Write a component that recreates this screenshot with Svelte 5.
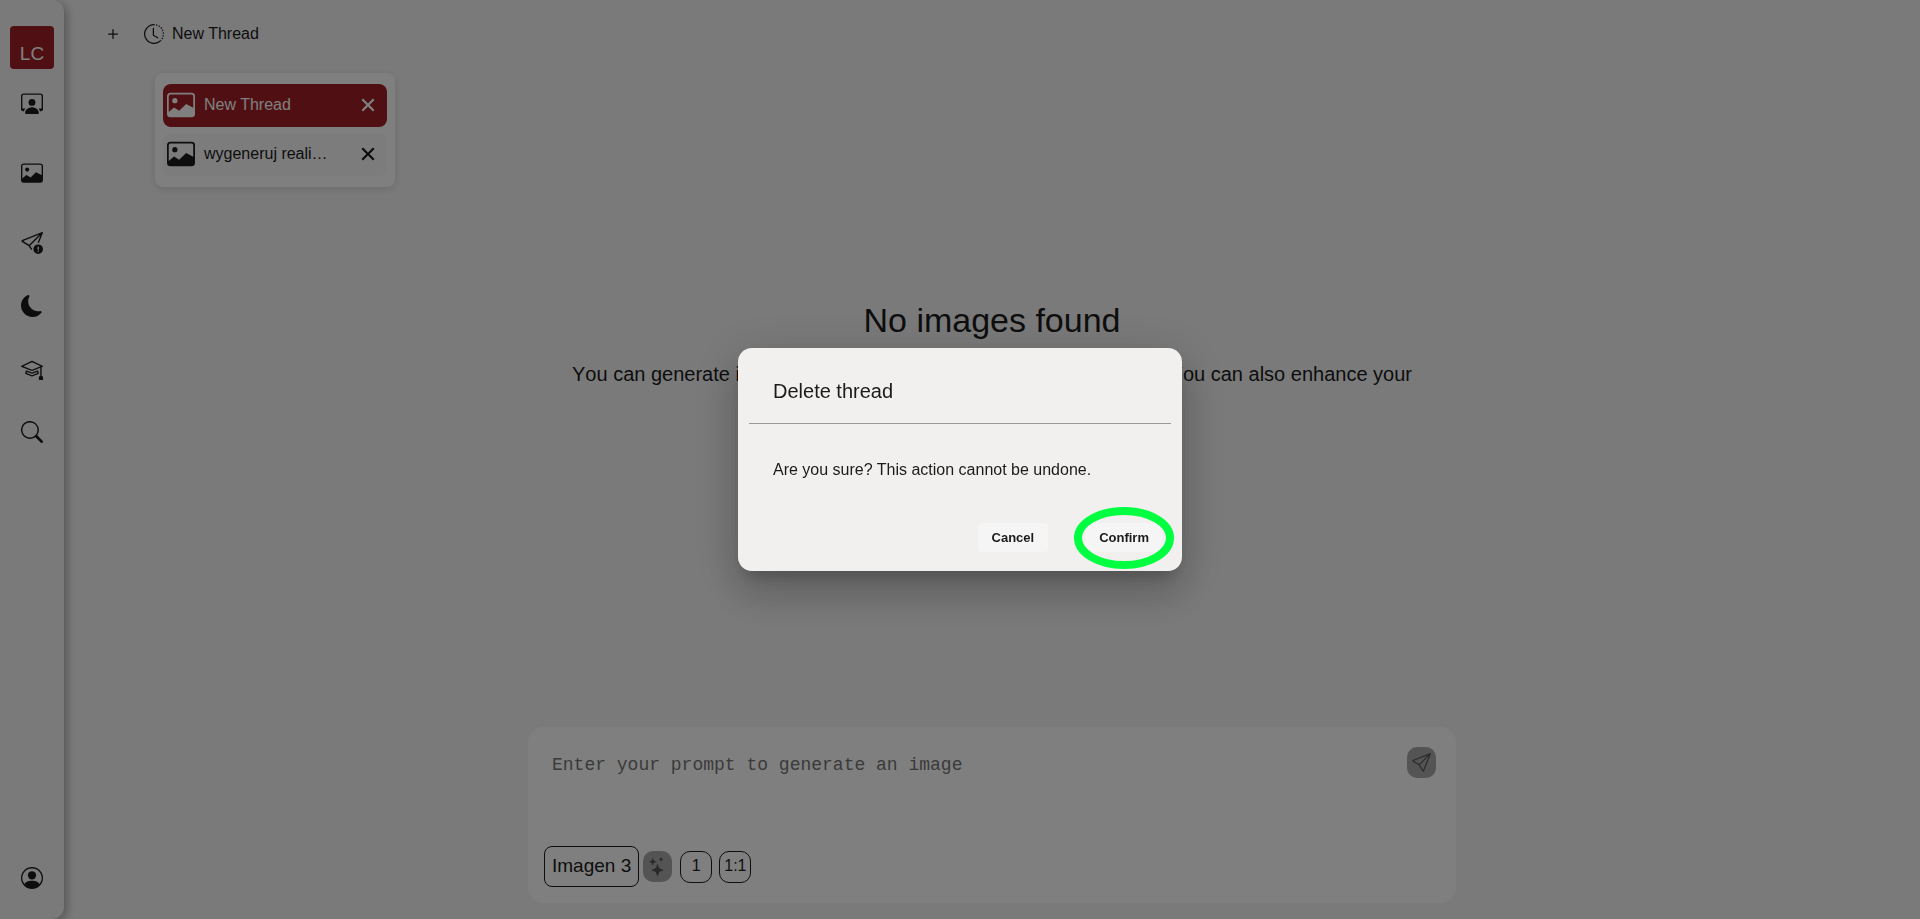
<script>
  const icons = {
    workspace: [
      'M4 16s-1 0-1-1 1-4 5-4 5 3 5 4-1 1-1 1zm4-5.95a2.5 2.5 0 1 0 0-5 2.5 2.5 0 0 0 0 5',
      'M2 1a2 2 0 0 0-2 2v9.5A1.5 1.5 0 0 0 1.5 14h.653a5.4 5.4 0 0 1 1.066-2H1V3a1 1 0 0 1 1-1h12a1 1 0 0 1 1 1v9h-2.219c.554.654.89 1.373 1.066 2h.653a1.5 1.5 0 0 0 1.5-1.5V3a2 2 0 0 0-2-2z'
    ],
    image: [
      'M6.002 5.5a1.5 1.5 0 1 1-3 0 1.5 1.5 0 0 1 3 0',
      'M2.002 1a2 2 0 0 0-2 2v10a2 2 0 0 0 2 2h12a2 2 0 0 0 2-2V3a2 2 0 0 0-2-2zm12 1a1 1 0 0 1 1 1v6.5l-3.777-1.947a.5.5 0 0 0-.577.093l-3.71 3.71-2.66-1.772a.5.5 0 0 0-.63.062L1.002 12V3a1 1 0 0 1 1-1z'
    ],
    report: [
      'M15.964.686a.5.5 0 0 0-.65-.65L.767 5.855a.75.75 0 0 0-.124 1.329l4.995 3.178 1.531 2.406a.5.5 0 0 0 .844-.536L6.637 10.07l7.494-7.494-1.895 4.738a.5.5 0 1 0 .928.372zm-2.54 1.183L5.93 9.363 1.591 6.602z',
      'M12.5 16a3.5 3.5 0 1 0 0-7 3.5 3.5 0 0 0 0 7m.5-5v1.5a.5.5 0 0 1-1 0V11a.5.5 0 0 1 1 0m0 3a.5.5 0 1 1-1 0 .5.5 0 0 1 1 0'
    ],
    moon: [
      'M6 .278a.77.77 0 0 1 .08.858 7.2 7.2 0 0 0-.878 3.46c0 4.021 3.278 7.277 7.318 7.277q.792-.001 1.533-.16a.79.79 0 0 1 .81.316.73.73 0 0 1-.031.893A8.35 8.35 0 0 1 8.344 16C3.734 16 0 12.286 0 7.71 0 4.266 2.114 1.312 5.124.06A.75.75 0 0 1 6 .278'
    ],
    mortarboard: [
      'M8.211 2.047a.5.5 0 0 0-.422 0l-7.5 3.5a.5.5 0 0 0 .025.917l7.5 3a.5.5 0 0 0 .372 0L14 7.14V13a1 1 0 0 0-1 1v2h3v-2a1 1 0 0 0-1-1V6.739l.686-.275a.5.5 0 0 0 .025-.917zM8 8.46 1.758 5.965 8 3.052l6.242 2.913z',
      'M4.176 9.032a.5.5 0 0 0-.656.327l-.5 1.7a.5.5 0 0 0 .294.605l4.5 1.8a.5.5 0 0 0 .372 0l4.5-1.8a.5.5 0 0 0 .294-.605l-.5-1.7a.5.5 0 0 0-.656-.327L8 10.466zm-.068 1.873.22-.748 3.496 1.311a.5.5 0 0 0 .352 0l3.496-1.311.22.748L8 12.46z'
    ],
    search: [
      'M11.742 10.344a6.5 6.5 0 1 0-1.397 1.398h-.001q.044.06.098.115l3.85 3.85a1 1 0 0 0 1.415-1.414l-3.85-3.85a1 1 0 0 0-.115-.1zM12 6.5a5.5 5.5 0 1 1-11 0 5.5 5.5 0 0 1 11 0'
    ],
    person: [
      'M11 6a3 3 0 1 1-6 0 3 3 0 0 1 6 0',
      'M0 8a8 8 0 1 1 16 0A8 8 0 0 1 0 8m8-7a7 7 0 0 0-5.468 11.37C3.242 11.226 4.805 10 8 10s4.757 1.225 5.468 2.37A7 7 0 0 0 8 1'
    ],
    history: [
      'M8.515 1.019A7 7 0 0 0 8 1V0a8 8 0 0 1 .589.022zm2.004.45a7 7 0 0 0-.985-.299l.219-.976q.576.129 1.126.342zm1.37.71a7 7 0 0 0-.439-.27l.493-.87a8 8 0 0 1 .979.654l-.615.789a7 7 0 0 0-.418-.302zm1.834 1.79a7 7 0 0 0-.653-.796l.724-.69q.406.429.747.91zm.744 1.352a7 7 0 0 0-.214-.468l.893-.45a8 8 0 0 1 .45 1.088l-.95.313a7 7 0 0 0-.179-.483m.53 2.507a7 7 0 0 0-.1-1.025l.985-.17q.1.58.116 1.17zm-.131 1.538q.05-.254.081-.51l.993.123a8 8 0 0 1-.23 1.155l-.964-.267q.069-.247.12-.501m-.952 2.379q.276-.436.486-.908l.914.405q-.24.54-.555 1.038zm-.964 1.205q.183-.183.35-.378l.758.653a8 8 0 0 1-.401.432z',
      'M8 1a7 7 0 1 0 4.95 11.95l.707.707A8.001 8.001 0 1 1 8 0z',
      'M7.5 3a.5.5 0 0 1 .5.5v5.21l3.248 1.856a.5.5 0 0 1-.496.868l-3.5-2A.5.5 0 0 1 7 9V3.5a.5.5 0 0 1 .5-.5'
    ],
    close: [
      'M2.2 3.6 3.6 2.2 8 6.6l4.4-4.4 1.4 1.4L9.4 8l4.4 4.4-1.4 1.4L8 9.4l-4.4 4.4-1.4-1.4L6.6 8z'
    ],
    plus: [
      'M8 4a.5.5 0 0 1 .5.5v3h3a.5.5 0 0 1 0 1h-3v3a.5.5 0 0 1-1 0v-3h-3a.5.5 0 0 1 0-1h3v-3A.5.5 0 0 1 8 4'
    ],
    send: [
      'M15.854.146a.5.5 0 0 1 .11.54l-5.819 14.547a.75.75 0 0 1-1.329.124l-3.178-4.995L.643 7.184a.75.75 0 0 1 .124-1.33L15.314.037a.5.5 0 0 1 .54.11ZM6.636 10.07l2.761 4.338L14.13 2.576zm6.787-8.201L1.591 6.602l4.339 2.76z'
    ],
    stars: [
      'M7.657 6.247c.11-.33.576-.33.686 0l.645 1.937a2.89 2.89 0 0 0 1.829 1.828l1.936.645c.33.11.33.576 0 .686l-1.937.645a2.89 2.89 0 0 0-1.828 1.829l-.645 1.936a.361.361 0 0 1-.686 0l-.645-1.937a2.89 2.89 0 0 0-1.828-1.828l-1.937-.645a.361.361 0 0 1 0-.686l1.937-.645a2.89 2.89 0 0 0 1.828-1.828zM3.794 1.148a.217.217 0 0 1 .412 0l.387 1.162c.173.518.579.924 1.097 1.097l1.162.387a.217.217 0 0 1 0 .412l-1.162.387A1.73 1.73 0 0 0 4.593 5.69l-.387 1.162a.217.217 0 0 1-.412 0L3.407 5.69A1.73 1.73 0 0 0 2.31 4.593l-1.162-.387a.217.217 0 0 1 0-.412l1.162-.387A1.73 1.73 0 0 0 3.407 2.31zM10.863.099a.145.145 0 0 1 .274 0l.258.774c.115.346.386.617.732.732l.774.258a.145.145 0 0 1 0 .274l-.774.258a1.16 1.16 0 0 0-.732.732l-.258.774a.145.145 0 0 1-.274 0l-.258-.774a1.16 1.16 0 0 0-.732-.732L9.1 2.137a.145.145 0 0 1 0-.274l.774-.258c.346-.115.617-.386.732-.732z'
    ]
  };

  const topNav = [
    { icon: 'workspace', label: 'Assistants', spaced: true },
    { icon: 'image', label: 'Images', spaced: true },
    { icon: 'report', label: 'Feedback' },
    { icon: 'moon', label: 'Theme' },
    { icon: 'mortarboard', label: 'Learn' },
    { icon: 'search', label: 'Search' }
  ];

  const threads = [
    { title: 'New Thread', active: true },
    { title: 'wygeneruj reali…', active: false }
  ];
</script>

{#snippet icon(name, size)}
  <svg width={size} height={size} viewBox="0 0 16 16" fill="currentColor" aria-hidden="true">
    {#each icons[name] as d}<path {d} />{/each}
  </svg>
{/snippet}

<div class="app">
  <nav class="sidebar">
    <a class="logo" href="#home">LC</a>
    {#each topNav as item}
      <button class="nav" class:spaced={item.spaced} aria-label={item.label}>{@render icon(item.icon, 22)}</button>
    {/each}
    <button class="nav account" aria-label="Account">{@render icon('person', 22)}</button>
  </nav>

  <main>
    <header>
      <button class="plain" aria-label="Add thread">{@render icon('plus', 20)}</button>
      <div class="history">
        <button class="plain current">{@render icon('history', 20)}<span>New Thread</span></button>
        <ul class="threads">
          {#each threads as thread}
            <li class:active={thread.active}>
              <button class="plain open">{@render icon('image', 28)}<span>{thread.title}</span></button>
              <button class="plain" aria-label="Delete">{@render icon('close', 18)}</button>
            </li>
          {/each}
        </ul>
      </div>
    </header>

    <section class="empty">
      <h1>No images found</h1>
      <p><span>You can generate images</span><span>You can also enhance your</span></p>
    </section>

    <form class="prompt">
      <div class="entry">
        <textarea aria-label="Prompt" placeholder="Enter your prompt to generate an image"></textarea>
        <button type="button" class="tool" aria-label="Send">{@render icon('send', 19)}</button>
      </div>
      <div class="options">
        <button type="button" class="model">Imagen 3</button>
        <button type="button" class="tool" aria-label="Enhance">{@render icon('stars', 19)}</button>
        <div class="choices">
          <button type="button" class="choice">1</button>
          <button type="button" class="choice">1:1</button>
        </div>
      </div>
    </form>
  </main>
</div>

<div class="backdrop">
  <div class="dialog" role="dialog" aria-modal="true" aria-labelledby="dialog-title">
    <h2 id="dialog-title">Delete thread</h2>
    <hr />
    <p>Are you sure? This action cannot be undone.</p>
    <div class="actions">
      <button>Cancel</button>
      <div class="marked">
        <button>Confirm</button>
        <svg class="ring" width="100" height="62" viewBox="0 0 100 62" aria-hidden="true">
          <ellipse cx="50" cy="31" rx="46" ry="27" fill="none" stroke="#00ff40" stroke-width="8" />
        </svg>
      </div>
    </div>
  </div>
</div>

<style>
  :global(body) {
    background: #f5f5f5;
    color: #1b1b1b;
    font-family: "Liberation Sans", Arial, sans-serif;
    font-size: 16px;
  }
  * { box-sizing: border-box; }
  h1, h2, p, ul { margin: 0; padding: 0; font-weight: 400; }
  button { font: inherit; color: inherit; padding: 0; border: 0; background: none; }
  svg { display: block; flex: none; }

  .app { display: flex; min-height: 100vh; }

  .sidebar {
    display: flex;
    flex-direction: column;
    align-items: center;
    width: 64px;
    padding: 26px 10px 22px;
    background: #f5f5f5;
    border-radius: 0 12px 12px 0;
    box-shadow: 3px 3px 10px rgba(0, 0, 0, 0.3);
  }
  .logo {
    width: 44px;
    height: 43px;
    margin-bottom: 2px;
    padding-top: 17px;
    border-radius: 4px;
    background: #a01f25;
    color: #fff;
    font-size: 19px;
    line-height: 22px;
    text-align: center;
    text-decoration: none;
  }
  .nav { display: grid; place-items: center; width: 44px; height: 63px; }
  .nav.spaced { margin-bottom: 7px; }
  .nav.account { height: auto; margin-top: auto; padding-top: 8px; padding-bottom: 8px; }

  main { flex: 1; display: flex; flex-direction: column; align-items: center; padding-bottom: 16px; }
  header { display: flex; align-self: stretch; align-items: center; gap: 21px; padding: 24px 39px 0; }
  .plain { display: flex; align-items: center; }
  .history { position: relative; }
  .current { gap: 8px; line-height: 20px; }
  .threads {
    position: absolute;
    top: 49px;
    left: 11px;
    display: grid;
    gap: 6px;
    width: 240px;
    padding: 11px 8px;
    list-style: none;
    background: #fff;
    border-radius: 8px;
    box-shadow: 0 2px 8px rgba(0, 0, 0, 0.12);
  }
  .threads li {
    display: flex;
    align-items: center;
    justify-content: space-between;
    height: 43px;
    padding: 0 10px 2px 4px;
    border-radius: 8px;
    background: #f8f8f8;
  }
  .threads .active { background: #a01f25; color: #fff; }
  .open { gap: 9px; }

  .empty { flex: 1; width: 100%; padding: 256px 32px 0; text-align: center; }
  .empty h1 { font-size: 34px; line-height: 40px; }
  .empty p {
    display: flex;
    justify-content: space-between;
    max-width: 840px;
    margin: 19px auto 0;
    font-size: 20px;
    line-height: 30px;
    font-kerning: none;
  }

  .prompt {
    display: flex;
    flex-direction: column;
    justify-content: space-between;
    width: 50%;
    min-height: 176px;
    padding: 20px 20px 16px 16px;
    border-radius: 16px;
    background: #fff;
  }
  .entry { display: flex; align-items: flex-start; }
  textarea {
    flex: 1;
    height: 72px;
    padding: 8px;
    border: 0;
    resize: none;
    background: none;
    font-family: "Liberation Mono", monospace;
    font-size: 18px;
    line-height: 20px;
  }
  textarea::placeholder { color: #757575; opacity: 1; }
  .options { display: flex; align-items: center; gap: 4px; }
  .model { height: 41px; padding: 0 7px 2px; border: 1px solid #1b1b1b; border-radius: 8px; font-size: 19px; }
  .tool {
    display: grid;
    place-items: center;
    width: 29px;
    height: 31px;
    border-radius: 10px;
    background: #a8a8a8;
    color: #555;
  }
  .choices { display: flex; gap: 7px; margin-left: 4px; }
  .choice { min-width: 32px; height: 32px; padding: 0 4px 2px; border: 1px solid #1b1b1b; border-radius: 10px; }

  .backdrop {
    position: fixed;
    inset: 0;
    display: grid;
    place-items: center;
    background: rgba(0, 0, 0, 0.5);
  }
  .dialog {
    width: 444px;
    padding: 28px 11px 19px;
    border-radius: 14px;
    background: #f1f0ee;
    box-shadow: 0 11px 15px -7px rgba(0, 0, 0, 0.2), 0 24px 38px 3px rgba(0, 0, 0, 0.14), 0 9px 46px 8px rgba(0, 0, 0, 0.12);
  }
  .dialog h2 { padding: 0 24px; font-size: 20px; line-height: 30px; }
  .dialog hr { margin: 17px 0 0; border: 0; border-top: 1px solid #999; }
  .dialog p { padding: 34px 24px 0; line-height: 24px; }
  .actions { display: flex; justify-content: flex-end; gap: 37px; padding: 41px 8px 0 0; }
  .actions button {
    height: 29px;
    padding: 0 14px;
    border-radius: 4px;
    background: #f5f5f5;
    font-size: 13px;
    font-weight: 700;
  }
  .marked { position: relative; }
  .ring { position: absolute; top: 50%; left: 50%; transform: translate(-50%, -50%); pointer-events: none; }
</style>
